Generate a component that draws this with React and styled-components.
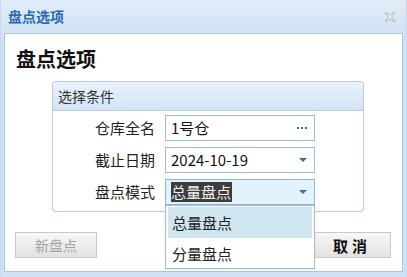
import React from "react";
import styled, { createGlobalStyle } from "styled-components";

const Global = createGlobalStyle`
  html, body { margin: 0; padding: 0; overflow: hidden; }
  body { font-family: "Noto Sans CJK SC", "Noto Sans", sans-serif; }
`;

const Window = styled.div`
  width: 407px;
  height: 277px;
  box-sizing: border-box;
  display: flex;
  flex-direction: column;
  background: linear-gradient(#e1ecf8, #cfe1f4 40px, #cfe1f4);
  border-left: 1px solid #c5d9ef;
  border-right: 1px solid #c5d9ef;
`;

const TitleBar = styled.div`
  height: 33px;
  flex: none;
  display: flex;
  align-items: center;
  justify-content: space-between;
  padding: 0 10px 0 7px;
  box-sizing: border-box;
`;

const Title = styled.div`
  color: #2a68b2;
  font-size: 14px;
  font-weight: bold;
  line-height: 1;
  margin-top: -1px;
`;

const Body = styled.div`
  flex: 1;
  margin: 0 3px 5px 3px;
  background: #fff;
  border: 1px solid #a9c6e6;
  display: flex;
  flex-direction: column;
  padding: 11px 10px 0 10px;
  box-sizing: border-box;
`;

const Heading = styled.div`
  font-size: 20px;
  font-weight: bold;
  color: #111;
  line-height: 28px;
  padding-left: 1px;
`;

const Group = styled.div`
  margin: 8px 0 0 37px;
  width: 312px;
  border: 1px solid #bccbdc;
  border-radius: 3px;
  box-sizing: border-box;
`;

const GroupHeader = styled.div`
  height: 28px;
  background: linear-gradient(#e9f2fb, #d2e3f4);
  border-bottom: 1px solid #b6cce3;
  display: flex;
  align-items: center;
  padding-left: 5px;
  font-size: 14px;
  color: #333;
  border-radius: 2px 2px 0 0;
`;

const GroupContent = styled.div`
  display: grid;
  grid-template-columns: 102px 150px;
  column-gap: 10px;
  row-gap: 6px;
  padding: 4px 0 6px 0;
  align-items: center;
`;

const Label = styled.div`
  text-align: right;
  font-size: 15px;
  color: #222;
  line-height: 26px;
`;

const Field = styled.div`
  position: relative;
  height: 26px;
  box-sizing: border-box;
  border: 1px solid ${(p) => (p.$active ? "#86b8e6" : "#9bb9d8")};
  background: ${(p) => (p.$active ? "#e2f3fd" : "#fff")};
  display: flex;
  align-items: center;
  padding: 0 6px 0 5px;
  font-size: 15px;
  color: #111;
`;

const FieldText = styled.span`
  flex: 1;
  line-height: 20px;
  white-space: nowrap;
`;

const Selected = styled.span`
  background: #3d3d3d;
  color: #f2f2f2;
  display: inline-block;
  line-height: 20px;
  padding-right: 1px;
`;

const Dots = styled.span`
  display: flex;
  gap: 2px;
  margin-right: 1px;
  & > i {
    width: 2px;
    height: 2px;
    background: #3d6fb8;
    display: block;
  }
`;

const Arrow = styled.span`
  width: 0;
  height: 0;
  border-left: 4px solid transparent;
  border-right: 4px solid transparent;
  border-top: 4px solid #3b6cb5;
  margin-right: 1px;
`;

const List = styled.div`
  position: absolute;
  left: -1px;
  top: 25px;
  width: 150px;
  height: 64px;
  box-sizing: border-box;
  border: 1px solid #a3bbd3;
  background: #fff;
  padding: 1px 2px;
  box-shadow: 0 1px 2px rgba(0, 0, 0, 0.08);
  z-index: 2;
`;

const Item = styled.div`
  height: 31px;
  display: flex;
  align-items: center;
  padding-left: 4px;
  font-size: 15px;
  color: #222;
  background: ${(p) => (p.$hover ? "#cfe5ef" : "transparent")};
`;

const Footer = styled.div`
  display: flex;
  justify-content: space-between;
  margin-top: 20px;
  padding-right: 1px;
`;

const Button = styled.div`
  width: 82px;
  height: 26px;
  box-sizing: border-box;
  border: 1px solid #c9c9c9;
  background: linear-gradient(#f7f7f7, #e2e2e2);
  display: flex;
  align-items: center;
  justify-content: center;
  font-size: ${(p) => (p.$primary ? "15px" : "14px")};
  font-weight: ${(p) => (p.$primary ? "bold" : "normal")};
  color: ${(p) => (p.$disabled ? "#a3a3a3" : "#111")};
  letter-spacing: ${(p) => (p.$primary ? "4px" : "0")};
  text-indent: ${(p) => (p.$primary ? "4px" : "0")};
`;

const CloseIcon = () => (
  <svg width="12" height="10" viewBox="0 0 12 10">
    <path
      d="M1 0.8 L3 0.8 L6 3.4 L9 0.8 L11 0.8 L7.5 5 L11 9.2 L9 9.2 L6 6.6 L3 9.2 L1 9.2 L4.5 5 Z"
      fill="#eef2f6"
      stroke="#a6aeb6"
      strokeWidth="0.9"
      strokeLinejoin="round"
    />
  </svg>
);

export default function App() {
  return (
    <>
      <Global />
      <Window>
        <TitleBar>
          <Title>盘点选项</Title>
          <CloseIcon />
        </TitleBar>
        <Body>
          <Heading>盘点选项</Heading>
          <Group>
            <GroupHeader>选择条件</GroupHeader>
            <GroupContent>
              <Label>仓库全名</Label>
              <Field>
                <FieldText>1号仓</FieldText>
                <Dots>
                  <i />
                  <i />
                  <i />
                </Dots>
              </Field>
              <Label>截止日期</Label>
              <Field>
                <FieldText>2024-10-19</FieldText>
                <Arrow />
              </Field>
              <Label>盘点模式</Label>
              <Field $active>
                <FieldText>
                  <Selected>总量盘点</Selected>
                </FieldText>
                <Arrow />
                <List>
                  <Item $hover>总量盘点</Item>
                  <Item>分量盘点</Item>
                </List>
              </Field>
            </GroupContent>
          </Group>
          <Footer>
            <Button $disabled>新盘点</Button>
            <Button $primary>取消</Button>
          </Footer>
        </Body>
      </Window>
    </>
  );
}
